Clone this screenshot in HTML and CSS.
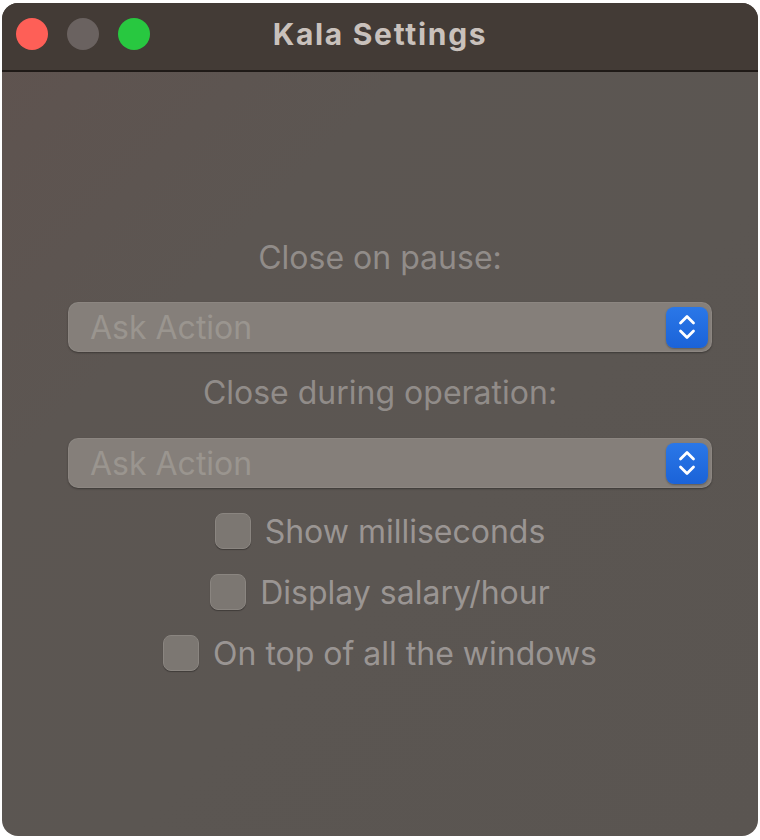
FILE: index.html
```html
<!DOCTYPE html>
<html>
<head>
<meta charset="utf-8">
<link rel="stylesheet" href="styles.css">
</head>
<body>
<div class="window">
  <div class="titlebar">
    <div class="lights">
      <span class="light red"></span>
      <span class="light gray"></span>
      <span class="light green"></span>
    </div>
    <div class="title">Kala Settings</div>
  </div>
  <div class="content">
    <div class="label first">Close on pause:</div>
    <div class="popup">
      <span class="popup-text">Ask Action</span>
      <span class="stepper">
        <svg width="24" height="30" viewBox="0 0 24 30"><path d="M5.5 11 L12 4.5 L18.5 11 M5.5 19 L12 25.5 L18.5 19" fill="none" stroke="#fff" stroke-width="2.8" stroke-linecap="round" stroke-linejoin="round"/></svg>
      </span>
    </div>
    <div class="label">Close during operation:</div>
    <div class="popup">
      <span class="popup-text">Ask Action</span>
      <span class="stepper">
        <svg width="24" height="30" viewBox="0 0 24 30"><path d="M5.5 11 L12 4.5 L18.5 11 M5.5 19 L12 25.5 L18.5 19" fill="none" stroke="#fff" stroke-width="2.8" stroke-linecap="round" stroke-linejoin="round"/></svg>
      </span>
    </div>
    <div class="check"><span class="box"></span><span>Show milliseconds</span></div>
    <div class="check"><span class="box"></span><span>Display salary/hour</span></div>
    <div class="check"><span class="box"></span><span>On top of all the windows</span></div>
  </div>
</div>
</body>
</html>
```
FILE: styles.css
```css
html, body {
  margin: 0;
  padding: 0;
  background: #ffffff;
}
body {
  padding: 3px 2px 4px 2px;
  font-family: Inter, "Open Sans", "Liberation Sans", sans-serif;
}
.window {
  width: 756px;
  height: 833px;
  border-radius: 16px;
  overflow: hidden;
  background: linear-gradient(135deg, #5f534f 0%, #5c5652 30%, #5b5652 60%, #5a5551 100%);
  display: flex;
  flex-direction: column;
}
.titlebar {
  height: 69px;
  background: #433b36;
  border-bottom: 2px solid #1f1a17;
  display: flex;
  align-items: center;
  position: relative;
  flex-shrink: 0;
  box-sizing: border-box;
  padding-bottom: 5px;
}
.lights {
  display: flex;
  gap: 19px;
  padding-left: 14px;
}
.light {
  width: 32px;
  height: 32px;
  border-radius: 50%;
  display: block;
}
.red { background: #fe5f57; }
.gray { background: #6a6260; }
.green { background: #28c840; }
.title {
  position: absolute;
  left: 0;
  right: 0;
  top: 0;
  bottom: 6px;
  display: flex;
  align-items: center;
  justify-content: center;
  font-weight: 700;
  font-size: 30px;
  letter-spacing: 1.7px;
  color: #c9c1bc;
}
.content {
  display: flex;
  flex-direction: column;
  align-items: center;
  padding-top: 168px;
}
.label {
  font-size: 32px;
  line-height: 36px;
  color: #918c89;
  margin-top: 23px;
  margin-bottom: 27px;
}
.label.first {
  margin-top: 0;
  margin-bottom: 26px;
}
.popup {
  width: 644px;
  height: 50px;
  margin-left: 20px;
  box-sizing: border-box;
  border-radius: 10px;
  background: #857f7a;
  box-shadow: 0 1px 2px rgba(0,0,0,0.35), inset 0 0 0 1px rgba(255,255,255,0.06);
  display: flex;
  align-items: center;
  justify-content: space-between;
  padding: 0 4px 0 22px;
}
.popup-text {
  font-size: 32px;
  color: #9a958f;
}
.stepper {
  width: 42px;
  height: 41px;
  border-radius: 8px;
  background: linear-gradient(#2a77e8, #1b63d8);
  display: flex;
  align-items: center;
  justify-content: center;
  box-shadow: 0 1px 2px rgba(0,0,0,0.3);
}
.check {
  display: flex;
  align-items: center;
  gap: 14px;
  font-size: 32px;
  color: #9a9593;
  height: 36px;
  margin-top: 25px;
}
.box {
  width: 36px;
  height: 36px;
  box-sizing: border-box;
  border-radius: 8px;
  background: #7c7772;
  border: 1px solid #8a8580;
  box-shadow: 0 1px 1px rgba(0,0,0,0.3);
}
```
